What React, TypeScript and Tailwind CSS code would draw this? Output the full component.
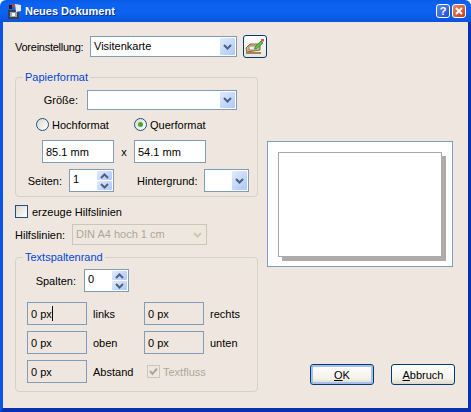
import React from "react";

const Chevron = ({ up = false, color = "#4d6185" }: { up?: boolean; color?: string }) => (
  <svg width="9" height="6" viewBox="0 0 9 6" className={up ? "rotate-180" : ""}>
    <path d="M1 1 L4.5 4.5 L8 1" fill="none" stroke={color} strokeWidth="2" />
  </svg>
);

const Select = ({ w, h, text }: { w: string; h: string; text?: string }) => (
  <div className={`${w} ${h} flex shrink-0 items-stretch border border-[#7f9db9] bg-white p-px`}>
    <span className="flex-1 pl-[2px] leading-[17px] text-black overflow-hidden whitespace-nowrap">{text}</span>
    <span className="flex w-[15px] items-center justify-center rounded-[1px] bg-[linear-gradient(135deg,#e1eafe,#aec8f7)]">
      <Chevron />
    </span>
  </div>
);

const Spin = ({ text, cls = "" }: { text: string; cls?: string }) => (
  <div className={`flex h-[23px] w-[45px] shrink-0 items-stretch border border-[#7f9db9] bg-white p-px ${cls}`}>
    <span className="flex-1 pl-[2px] leading-[17px]">{text}</span>
    <span className="flex w-[15px] flex-col gap-px">
      <span className="flex flex-1 items-center justify-center rounded-[1px] bg-[linear-gradient(135deg,#e1eafe,#aec8f7)]">
        <Chevron up />
      </span>
      <span className="flex flex-1 items-center justify-center rounded-[1px] bg-[linear-gradient(135deg,#e1eafe,#aec8f7)]">
        <Chevron />
      </span>
    </span>
  </div>
);

const TextBox = ({ text, w, white = false, caret = false }: { text: string; w: string; white?: boolean; caret?: boolean }) => (
  <div className={`${w} flex h-[23px] shrink-0 items-center border border-[#7f9db9] pl-[3px] ${white ? "bg-white" : ""}`}>
    {text}
    {caret && <span className="h-[15px] w-px bg-black" />}
  </div>
);

const Radio = ({ on = false }: { on?: boolean }) => (
  <span className="flex h-[13px] w-[13px] shrink-0 items-center justify-center rounded-full border border-[#1c5180] bg-[linear-gradient(135deg,#dcd8ce,#ffffff)]">
    {on && <span className="h-[5px] w-[5px] rounded-full bg-[#3ea93c]" />}
  </span>
);

const Group = ({ title, h, cls, children }: { title: string; h: string; cls: string; children: React.ReactNode }) => (
  <fieldset className={`${h} ${cls} w-[243px] rounded-[4px] border border-[#d6d2c2]`}>
    <legend className="ml-[7px] px-[2px] leading-[14px] text-[#0046d5]">{title}</legend>
    {children}
  </fieldset>
);

const MarginRow = ({ mt, a, la, b, lb, caret }: { mt: string; a: string; la: string; b: string; lb: string; caret?: boolean }) => (
  <div className={`${mt} ml-[11px] flex items-center`}>
    <TextBox text={a} w="w-[60px]" caret={caret} />
    <span className="ml-[6px] w-[51px]">{la}</span>
    <TextBox text={b} w="w-[60px]" />
    <span className="ml-[6px]">{lb}</span>
  </div>
);

const WindowIcon = () => (
  <svg width="18" height="18" viewBox="0 0 18 18" className="shrink-0">
    <rect x="3" y="8" width="11" height="9" fill="#3b4048" />
    <rect x="5" y="10" width="7" height="5" fill="#9aa6b8" />
    <rect x="7" y="11" width="3" height="3" fill="#ffffff" />
    <path d="M10 2 L16 3 L16 9 L11 10 Z" fill="#e6e9ef" />
    <rect x="4" y="3" width="3" height="4" fill="#1a1a1a" />
    <rect x="7" y="2" width="3" height="3" fill="#d0402a" />
  </svg>
);

const EditIcon = () => (
  <svg width="20" height="17" viewBox="0 0 20 17">
    <path d="M1 10 L5 6 L15 6 L15 12 L2 14 Z" fill="#d8b98a" stroke="#8a6a3c" />
    <rect x="4" y="8" width="10" height="4" fill="#f4efe2" stroke="#8f8a78" />
    <path d="M1 14 L16 14 L16 16 L1 16 Z" fill="#a88450" />
    <path d="M10 9 L16 3 L18 5 L12 10.5 L9.5 11 Z" fill="#5cc048" stroke="#2f7a2a" strokeWidth="0.7" />
    <rect x="16" y="1" width="3" height="2.5" fill="#e0505a" />
  </svg>
);

const Button = ({ k, rest, def = false }: { k: string; rest: string; def?: boolean }) => (
  <div
    className={`flex h-[21px] w-[64px] shrink-0 items-center justify-center rounded-[3px] border border-[#003c74] bg-[linear-gradient(#ffffff,#f4f2ea_70%,#dcd8cc)] text-black ${
      def ? "shadow-[inset_0_0_0_2px_#a6c0ec]" : ""
    }`}
  >
    <span>
      <span className="underline">{k}</span>
      {rest}
    </span>
  </div>
);

export default function App() {
  return (
    <div className="flex h-[412px] w-[471px] flex-col overflow-hidden bg-white font-['Liberation_Sans',Arial,sans-serif] text-[11px] leading-[14px] text-black">
      <div className="flex h-[22px] shrink-0 items-center rounded-t-[6px] bg-[linear-gradient(#0a5ae4,#0b63ef_15%,#0a62ee_60%,#0a54dc)] pl-[5px] pr-[5px]">
        <WindowIcon />
        <span className="ml-[2px] flex-1 text-[11px] font-bold text-white [text-shadow:1px_1px_0_#0a2f90]">Neues Dokument</span>
        <span className="flex h-[14px] w-[14px] items-center justify-center rounded-[3px] border border-white bg-[linear-gradient(135deg,#5a85f0,#1f4fd0)] text-[11px] font-bold text-white">?</span>
        <span className="ml-[2px] flex h-[14px] w-[14px] items-center justify-center rounded-[3px] border border-white bg-[linear-gradient(135deg,#e88a6a,#c83a1a)]">
          <svg width="8" height="8" viewBox="0 0 8 8">
            <path d="M1 1 L7 7 M7 1 L1 7" stroke="#fff" strokeWidth="2" />
          </svg>
        </span>
      </div>

      <div className="flex flex-1 border-b-[4px] border-l-[3px] border-r-[3px] border-b-[#0a2fb0] border-l-[#0a55e8] border-r-[#0a2fb0] bg-[#efe7df] pl-[12px]">
        <div className="w-[243px] shrink-0">
          <div className="mt-[13px] flex h-[23px] items-center">
            <span className="w-[75px] shrink-0 tracking-[-0.25px]">Voreinstellung:</span>
            <Select w="w-[147px]" h="h-[21px]" text="Visitenkarte" />
            <span className="ml-[6px] flex h-[23px] w-[24px] shrink-0 items-center justify-center rounded-[3px] border border-[#003c74] bg-[linear-gradient(#ffffff,#e8e6dc)]">
              <EditIcon />
            </span>
          </div>

          <Group title="Papierformat" h="h-[127px]" cls="mt-[12px]">
            <div className="mt-[6px] flex items-center">
              <span className="w-[62px] text-right">Größe:</span>
              <span className="ml-[9px]">
                <Select w="w-[150px]" h="h-[20px]" />
              </span>
            </div>
            <div className="mt-[8px] ml-[20px] flex h-[13px] items-center">
              <span className="flex w-[98px] items-center gap-[3px]">
                <Radio />
                Hochformat
              </span>
              <span className="flex items-center gap-[3px]">
                <Radio on />
                Querformat
              </span>
            </div>
            <div className="mt-[9px] ml-[26px] flex items-center">
              <TextBox text="85.1 mm" w="w-[72px]" white />
              <span className="w-[20px] text-center">x</span>
              <TextBox text="54.1 mm" w="w-[72px]" white />
            </div>
            <div className="mt-[6px] flex items-center">
              <span className="w-[46px] text-right">Seiten:</span>
              <span className="ml-[7px]">
                <Spin text="1" />
              </span>
              <span className="ml-[23px] w-[67px]">Hintergrund:</span>
              <Select w="w-[45px]" h="h-[23px]" />
            </div>
          </Group>

          <div className="mt-[8px] flex h-[13px] items-center">
            <span className="h-[13px] w-[13px] border border-[#1c5180] bg-[linear-gradient(135deg,#dcd8ce,#ffffff)]" />
            <span className="ml-[4px]">erzeuge Hilfslinien</span>
          </div>

          <div className="mt-[6px] flex h-[21px] items-center">
            <span className="w-[57px] shrink-0">Hilfslinien:</span>
            <div className="flex h-[21px] w-[135px] items-stretch border border-[#c9c7ba] p-px text-[#aca899]">
              <span className="flex-1 pl-[2px] leading-[17px]">DIN A4 hoch 1 cm</span>
              <span className="flex w-[15px] items-center justify-center rounded-[1px] bg-[#ebe8dc]">
                <Chevron color="#c9c7ba" />
              </span>
            </div>
          </div>

          <Group title="Textspaltenrand" h="h-[142px]" cls="mt-[5px]">
            <div className="mt-[5px] flex items-center">
              <span className="w-[60px] text-right">Spalten:</span>
              <span className="ml-[8px]">
                <Spin text="0" />
              </span>
            </div>
            <MarginRow mt="mt-[10px]" a="0 px" la="links" b="0 px" lb="rechts" caret />
            <MarginRow mt="mt-[6px]" a="0 px" la="oben" b="0 px" lb="unten" />
            <div className="mt-[6px] ml-[11px] flex items-center">
              <TextBox text="0 px" w="w-[60px]" />
              <span className="ml-[6px] w-[54px]">Abstand</span>
              <span className="flex h-[13px] w-[13px] items-center justify-center border border-[#c9c7ba]">
                <svg width="9" height="9" viewBox="0 0 9 9">
                  <path d="M1 4 L3.5 7 L8 1.5" fill="none" stroke="#aca899" strokeWidth="2" />
                </svg>
              </span>
              <span className="ml-[3px] text-[#aca899]">Textfluss</span>
            </div>
          </Group>
        </div>

        <div className="ml-[9px] flex flex-col">
          <div className="mt-[119px] h-[126px] w-[186px] border border-[#7f9db9] bg-white pl-[10px] pt-[10px]">
            <div className="h-[105px] w-[164px] border border-[#aaaaaa] bg-white shadow-[4px_4px_0_#b0aaa8]" />
          </div>
          <div className="mt-[97px] ml-[43px] flex gap-[17px]">
            <Button k="O" rest="K" def />
            <Button k="A" rest="bbruch" />
          </div>
        </div>
      </div>
    </div>
  );
}
